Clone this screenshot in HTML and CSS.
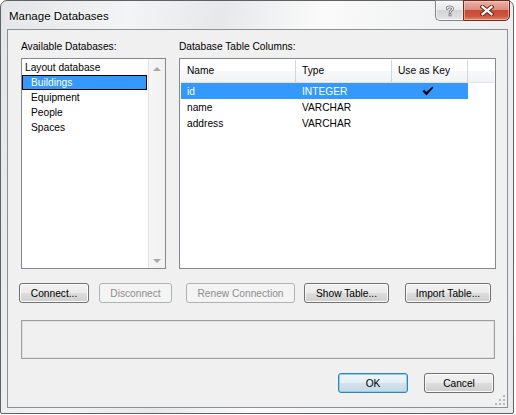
FILE: index.html
```html
<!DOCTYPE html>
<html>
<head>
<meta charset="utf-8">
<link rel="stylesheet" href="styles.css">
</head>
<body>
<div class="window">
  <div class="titlebar">
    <span class="title">Manage Databases</span>
    <div class="caption">
      <div class="cbtn help">
        <svg width="10" height="12" viewBox="0 0 10 12">
          <path d="M2.2 3.6 C2.2 1.4 7.6 1.2 7.6 3.6 C7.6 5.4 5 5.4 5 7.4" fill="none" stroke="#6d6f72" stroke-width="2.6" stroke-linecap="round"/>
          <path d="M2.2 3.6 C2.2 1.4 7.6 1.2 7.6 3.6 C7.6 5.4 5 5.4 5 7.4" fill="none" stroke="#f4f4f4" stroke-width="1.1" stroke-linecap="round"/>
          <rect x="3.6" y="8.6" width="2.8" height="2.6" fill="#6d6f72"/>
          <rect x="4.3" y="9.3" width="1.4" height="1.2" fill="#f4f4f4"/>
        </svg>
      </div>
      <div class="cbtn close">
        <svg width="14" height="11" viewBox="0 0 14 11">
          <path d="M2.5 1.8 L11.5 9.2 M11.5 1.8 L2.5 9.2" stroke="#6e2418" stroke-width="4.2" stroke-linecap="square"/>
          <path d="M2.5 1.8 L11.5 9.2 M11.5 1.8 L2.5 9.2" stroke="#ffffff" stroke-width="2.2" stroke-linecap="square"/>
        </svg>
      </div>
    </div>
  </div>

  <div class="client">
    <div class="top">
      <div class="left-col">
        <div class="label">Available Databases:</div>
        <div class="listbox">
          <div class="items">
            <div class="item">Layout database</div>
            <div class="item sub selected">Buildings</div>
            <div class="item sub">Equipment</div>
            <div class="item sub">People</div>
            <div class="item sub">Spaces</div>
          </div>
          <div class="vscroll">
            <span class="arrow up"></span>
            <span class="arrow down"></span>
          </div>
        </div>
      </div>
      <div class="right-col">
        <div class="label">Database Table Columns:</div>
        <div class="grid">
          <div class="ghead">
            <div class="hcell c1">Name</div>
            <div class="hcell c2">Type</div>
            <div class="hcell c3">Use as Key</div>
          </div>
          <div class="grow sel">
            <div class="gcell c1">id</div>
            <div class="gcell c2">INTEGER</div>
            <div class="gcell c3 check">
              <svg width="12" height="10" viewBox="0 0 12 10">
                <path d="M0.5 5.2 L2.3 3.8 L4.3 6 L10.6 0.4 L11.5 1.4 L4.4 9.6 Z" fill="#000"/>
              </svg>
            </div>
          </div>
          <div class="grow">
            <div class="gcell c1">name</div>
            <div class="gcell c2">VARCHAR</div>
            <div class="gcell c3"></div>
          </div>
          <div class="grow">
            <div class="gcell c1">address</div>
            <div class="gcell c2">VARCHAR</div>
            <div class="gcell c3"></div>
          </div>
        </div>
      </div>
    </div>

    <div class="btn-row">
      <div class="btn b-connect">Connect...</div>
      <div class="btn disabled b-disconnect">Disconnect</div>
      <div class="btn disabled b-renew">Renew Connection</div>
      <div class="btn b-show">Show Table...</div>
      <div class="btn b-import">Import Table...</div>
    </div>

    <div class="status"></div>

    <div class="dlg-row">
      <div class="btn default b-ok">OK</div>
      <div class="btn b-cancel">Cancel</div>
    </div>

    <svg class="grip" width="12" height="12" viewBox="0 0 12 12">
      <rect x="9" y="1" width="2" height="2" fill="#b9b9b9"/>
      <rect x="5" y="5" width="2" height="2" fill="#b9b9b9"/>
      <rect x="9" y="5" width="2" height="2" fill="#b9b9b9"/>
      <rect x="1" y="9" width="2" height="2" fill="#b9b9b9"/>
      <rect x="5" y="9" width="2" height="2" fill="#b9b9b9"/>
      <rect x="9" y="9" width="2" height="2" fill="#b9b9b9"/>
    </svg>
  </div>
</div>
</body>
</html>
```

FILE: styles.css
```css
* { box-sizing: border-box; }

body {
  margin: 0;
  background: #ffffff;
  font-family: "Liberation Sans", Arial, sans-serif;
  font-size: 10.2px;
  color: #000;
}

.window {
  width: 514px;
  height: 414px;
  border: 1px solid #5d6166;
  border-radius: 7px 7px 2px 2px;
  background: linear-gradient(100deg, #e3e5e8 0%, #f3f4f5 22%, #e6e8ea 38%, #fafafa 55%, #f1f2f3 75%, #e8eaec 100%);
  display: flex;
  flex-direction: column;
  position: relative;
}

.titlebar {
  height: 28px;
  display: flex;
  justify-content: space-between;
  align-items: flex-start;
  flex: none;
}

.title {
  font-size: 11.5px;
  line-height: 15px;
  padding: 8px 0 0 8px;
  color: #000;
  text-shadow: 0 0 6px #fff, 0 0 3px #fff;
}

.caption {
  display: flex;
  margin-right: 3px;
  margin-top: -1px;
}

.cbtn {
  height: 21px;
  display: flex;
  align-items: center;
  justify-content: center;
}

.cbtn.help {
  width: 28px;
  border: 1px solid #80858b;
  border-right: none;
  border-radius: 0 0 0 5px;
  background: linear-gradient(#f7f7f7 0%, #e7e8e9 45%, #d3d5d7 50%, #dcdee0 85%, #eceded 100%);
  box-shadow: inset 0 0 0 1px rgba(255,255,255,0.6);
}

.cbtn.close {
  width: 47px;
  border: 1px solid #6a2a22;
  border-radius: 0 0 5px 0;
  background: linear-gradient(#eab3a7 0%, #dc8c7e 45%, #c74a33 50%, #cc553e 80%, #e08a70 100%);
  box-shadow: inset 0 0 0 1px rgba(255,220,210,0.5);
}

.client {
  flex: 1;
  margin: 0 5px 5px 6px;
  border: 1px solid #8c8f93;
  background: #f0f0f0;
  padding: 10px 11px 0 13px;
  display: flex;
  flex-direction: column;
  position: relative;
}

.top {
  display: flex;
  gap: 13px;
}

.left-col { width: 145px; }
.right-col { width: 317px; }

.label {
  height: 13px;
  line-height: 13px;
  margin-bottom: 5px;
  white-space: nowrap;
}

.listbox {
  height: 211px;
  border: 1px solid #828790;
  background: #fff;
  display: flex;
}

.items {
  flex: 1;
  padding-top: 1px;
}

.item {
  height: 15px;
  line-height: 15px;
  padding-left: 3px;
  white-space: nowrap;
}

.item.sub { padding-left: 9px; }

.item.selected {
  background: #3399ff;
  color: #fff;
  border: 1px solid #000;
  line-height: 13px;
  padding-left: 8px;
  margin-right: 1px;
}

.vscroll {
  width: 17px;
  background: linear-gradient(to right, #e3e3e3 0, #e3e3e3 1px, #f6f6f6 1px, #f1f1f1 100%);
  display: flex;
  flex-direction: column;
  justify-content: space-between;
  align-items: center;
  padding: 8px 0 5px;
}

.arrow {
  width: 0;
  height: 0;
  border-left: 4px solid transparent;
  border-right: 4px solid transparent;
}

.arrow.up { border-bottom: 4px solid #a8a8a8; }
.arrow.down { border-top: 4px solid #a8a8a8; }

.grid {
  height: 211px;
  border: 1px solid #828790;
  background: #fff;
  padding: 1px;
}

.ghead {
  display: flex;
  height: 23px;
  background: linear-gradient(#ffffff 0%, #ffffff 50%, #f7f8f9 50%, #f2f3f4 100%);
  border-bottom: 1px solid #e2e3e5;
}

.hcell {
  line-height: 22px;
  padding-left: 6px;
  border-right: 1px solid #d5d5d5;
  white-space: nowrap;
}

.c1 { width: 115px; }
.c2 { width: 96px; }
.c3 { width: 76px; }

.grow {
  display: flex;
  height: 16px;
  width: 287px;
}

.grow.sel {
  background: #3399ff;
  color: #fff;
}

.gcell {
  line-height: 17px;
  padding-left: 6px;
  white-space: nowrap;
}

.gcell.check {
  padding-left: 0;
  display: flex;
  align-items: center;
  justify-content: center;
  padding-right: 4px;
}

.btn-row {
  display: flex;
  margin-top: 14px;
  height: 20px;
}

.btn {
  height: 20px;
  border: 1px solid #707070;
  border-radius: 3px;
  background: linear-gradient(#f2f2f2 0%, #ebebeb 48%, #dddddd 52%, #cfcfcf 100%);
  box-shadow: inset 0 0 0 1px #fbfbfb;
  display: flex;
  align-items: center;
  justify-content: center;
  white-space: nowrap;
}

.btn.disabled {
  border-color: #adb2b5;
  background: #f4f4f4;
  box-shadow: none;
  color: #8d8d8d;
}

.b-connect { width: 70px; margin-left: -2px; }
.b-disconnect { width: 73px; margin-left: 10px; }
.b-renew { width: 109px; margin-left: 14px; }
.b-show { width: 85px; margin-left: 9px; }
.b-import { width: 86px; margin-left: 16px; }

.status {
  margin-top: 17px;
  margin-right: 1px;
  height: 39px;
  border: 1px solid #9e9e9e;
  box-shadow: inset 0 0 0 1px #e2e2e2;
}

.dlg-row {
  display: flex;
  justify-content: flex-end;
  gap: 16px;
  margin-top: 14px;
  margin-right: 2px;
}

.b-ok, .b-cancel { width: 70px; }

.btn.default {
  border-color: #3c7fb1;
  box-shadow: inset 0 0 0 1px #7fd4f6;
  background: linear-gradient(#eef5fa 0%, #e5eef4 48%, #d4e2ec 52%, #c8d8e4 100%);
}

.grip {
  position: absolute;
  right: 1px;
  bottom: 1px;
}
```
